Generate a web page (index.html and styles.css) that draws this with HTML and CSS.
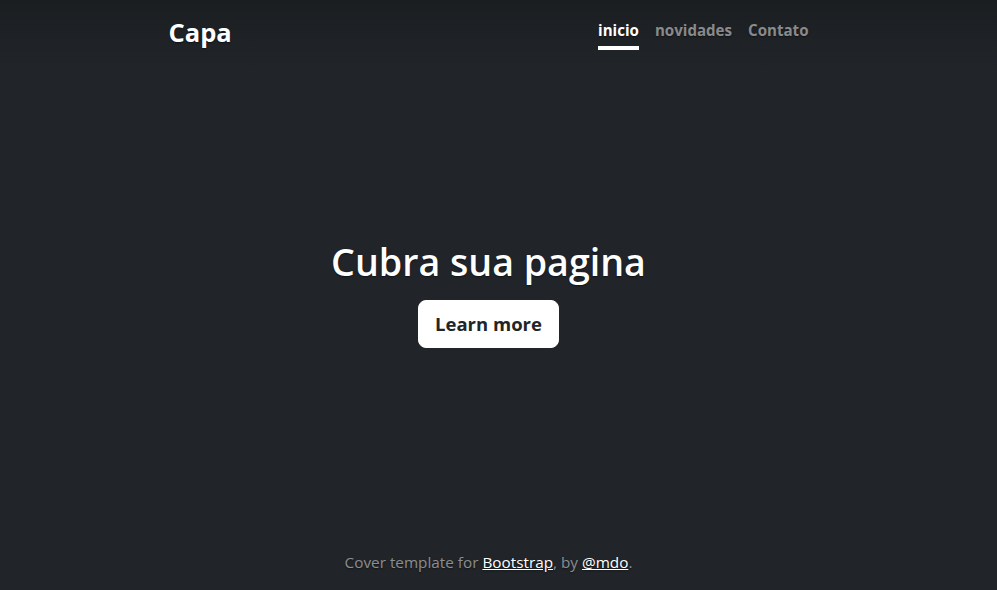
FILE: index.html
```html
<!DOCTYPE html>
<html lang="pt">
<head>
<meta charset="utf-8">
<title>Capa</title>
<link rel="stylesheet" href="styles.css">
</head>
<body>
<div class="page">
  <div class="cover">
    <header class="masthead">
      <h3 class="brand">Capa</h3>
      <nav class="nav">
        <a class="nav-link active" href="#">inicio</a>
        <a class="nav-link" href="#">novidades</a>
        <a class="nav-link" href="#">Contato</a>
      </nav>
    </header>
    <main class="hero">
      <h1 class="title">Cubra sua pagina</h1>
      <a class="btn" href="#">Learn more</a>
    </main>
    <footer class="foot">
      <p>Cover template for <a href="#">Bootstrap</a>, by <a href="#">@mdo</a>.</p>
    </footer>
  </div>
</div>
</body>
</html>
```
FILE: styles.css
```css
* { box-sizing: border-box; }
html, body { margin: 0; height: 100%; }
body {
  background: linear-gradient(to bottom, #1b1e21 0, #212529 70px) #212529;
  color: #fff;
  font-family: "Open Sans", "Noto Sans", sans-serif;
  font-size: 16px;
  line-height: 1.5;
  text-shadow: 0 0.8px 1.6px rgba(0,0,0,.5);
}
.page {
  height: 100%;
  padding-right: 20px;
}
.cover {
  max-width: 672px;
  height: 100%;
  margin: 0 auto;
  padding: 16px;
  display: flex;
  flex-direction: column;
  text-align: center;
}
.masthead {
  display: flex;
  justify-content: space-between;
  align-items: flex-start;
}
.brand {
  margin: 0;
  font-size: 25.5px;
  font-weight: 700;
  line-height: 32px;
}
.nav { display: flex; gap: 16px; margin-top: -2px; }
.nav-link {
  color: rgba(255,255,255,.5);
  font-size: 15.1px;
  font-weight: 700;
  text-decoration: none;
  padding: 4px 0;
  border-bottom: 4px solid transparent;
  line-height: 24px;
}
.nav-link.active { color: #fff; border-bottom-color: #fff; }
.hero {
  margin: auto 0;
  display: flex;
  flex-direction: column;
  align-items: center;
  padding-bottom: 14px;
}
.title {
  margin: 0 0 16px;
  font-size: 37.6px;
  font-weight: 600;
  line-height: 44px;
}
.btn {
  display: inline-block;
  background: #fff;
  color: #212529;
  border: 1px solid #fff;
  border-radius: 8px;
  padding: 8px 16px;
  font-size: 18.5px;
  line-height: 30px;
  font-weight: 700;
  text-decoration: none;
  text-shadow: none;
}
.foot { color: rgba(255,255,255,.5); font-size: 15.3px; }
.foot p { margin: 0; }
.foot a { color: #fff; }
```
